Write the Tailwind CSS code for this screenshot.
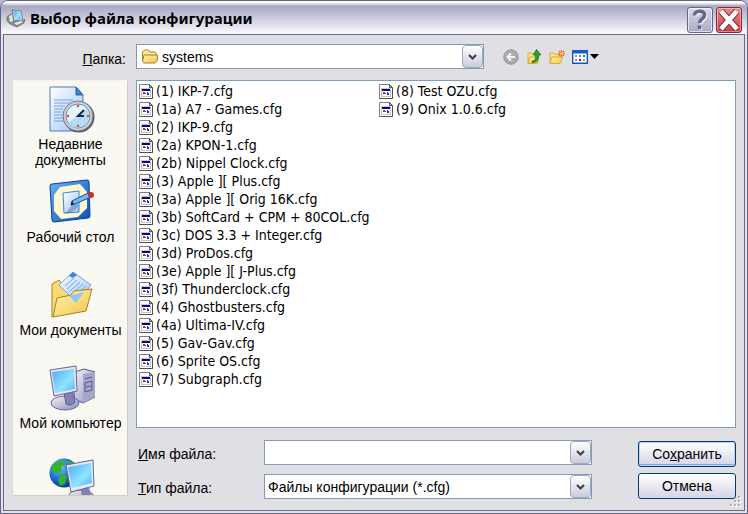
<!DOCTYPE html>
<html lang="ru">
<head>
<meta charset="utf-8">
<title>Выбор файла конфигурации</title>
<script src="https://cdn.jsdelivr.net/npm/@tailwindcss/browser@4"></script>
</head>
<body class="bg-[#b9b9cc] font-['Liberation_Sans',Arial,sans-serif] text-sm leading-4 text-black">
<svg class="absolute size-0" aria-hidden="true">
  <defs>
    <linearGradient id="screen" x1="0" y1="0" x2="1" y2="1"><stop offset="0" stop-color="#4fa8fa"/><stop offset=".6" stop-color="#8fe4ff"/><stop offset="1" stop-color="#4fb0f8"/></linearGradient>
    <linearGradient id="folder" x1="0" y1="0" x2="1" y2="1"><stop offset="0" stop-color="#fff6b8"/><stop offset="1" stop-color="#f4c242"/></linearGradient>
    <linearGradient id="paper" x1="0" y1="0" x2="1" y2="1"><stop offset="0" stop-color="#ffffff"/><stop offset="1" stop-color="#9ec4f6"/></linearGradient>
    <linearGradient id="metal" x1="0" y1="0" x2="1" y2="1"><stop offset="0" stop-color="#f4f4fb"/><stop offset="1" stop-color="#8c8cb8"/></linearGradient>
    <linearGradient id="blue" x1="0" y1="0" x2="1" y2="1"><stop offset="0" stop-color="#6ab0f8"/><stop offset="1" stop-color="#0b4fb4"/></linearGradient>
    <radialGradient id="globe" cx=".35" cy=".3" r=".8"><stop offset="0" stop-color="#7cc4ff"/><stop offset=".5" stop-color="#1b6fe0"/><stop offset="1" stop-color="#06287c"/></radialGradient>
    <symbol id="cfg" viewBox="0 0 14 15">
      <path d="M.5.5h10l3 3v11H.5z" fill="#fff" stroke="#808080"/><path d="M13.500 3.500v11H.5" fill="none" stroke="#50504a"/><path d="M10.500.5v3h3z" fill="#c8c8c0" stroke="#50504a"/>
      <path d="M2 4h10v9H2z" fill="#c4c4c4"/><path d="M3 5h8v2H3z" fill="#000090"/><path d="M3 7h8v5H3z" fill="#fff"/>
      <path d="M4 8h2v2H4z" fill="#e02020"/><path d="M6 9h1v1H6z" fill="#208020"/><path d="M8 8h1v1H8zM8 9h2v2H8z" fill="#1830d0"/>
    </symbol>
    <symbol id="chev" viewBox="0 0 9 6"><path d="M1 1l3.500 3.500L8 1" fill="none" stroke="#3c3c48" stroke-width="2"/></symbol>
  </defs>
</svg>

<main class="flex h-screen flex-col overflow-hidden rounded-t-lg border border-[#62627e] bg-[#e2e2ee] px-0.5 pb-0.5">
  <header class="-mx-0.5 flex h-[33px] shrink-0 items-center gap-1 bg-linear-to-b from-white from-5% via-[#a8a8c4] via-15% to-[#fbfbfe] pr-[5px] pl-[5px]">
    <svg class="size-5" viewBox="0 0 20 20" aria-hidden="true">
      <path d="M1 9l4-3 2 7 9 1 3-3-1 4-7 4-7-3-3-3z" fill="#8b8b90" stroke="#66666c" stroke-width=".7"/>
      <path d="M3 8l3-1 1 6-3 1zM8 15l7-2 2 1-6 3z" fill="#e7e7ea"/>
      <path d="M6 2l9 1 2 9-9 1z" fill="#ddd" stroke="#666" stroke-width=".8"/><path d="M7 3l7 1 1 7-6 1z" fill="url(#screen)"/>
    </svg>
    <h1 class="flex-1 font-['Noto_Sans','Open_Sans',sans-serif] text-[15px] leading-5 font-bold">Выбор файла конфигурации</h1>
    <div class="flex gap-[3px] pt-1">
      <button type="button" aria-label="Справка" class="flex size-[26px] items-center justify-center rounded-[3px] border border-[#66668c] bg-linear-to-b from-[#dadae8] to-[#a9a9c4] ring-1 ring-white/60 ring-inset">
        <svg class="h-[22px] w-5" viewBox="0 0 20 24" fill="none" stroke-width="4" aria-hidden="true"><path d="M5 8c0-6 11-6 11-.5 0 4-5.500 4-5.500 9M10.500 19v4" stroke="#fff"/><path d="M4 7c0-6 11-6 11-.5 0 4-5.500 4-5.500 9M9.500 18v4" stroke="#66668e"/></svg>
      </button>
      <button type="button" aria-label="Закрыть" class="flex size-[26px] items-center justify-center rounded-[3px] border border-[#8c2433] bg-linear-to-b from-[#e98a8a] to-[#c33c44] ring-1 ring-white/40 ring-inset">
        <svg class="size-[22px]" viewBox="0 0 22 22" fill="none" aria-hidden="true"><path d="M3 2l16 18M19 2L3 20" stroke="#7c2530" stroke-width="6.400"/><path d="M3 2l16 18M19 2L3 20" stroke="#fff" stroke-width="4.800"/></svg>
      </button>
    </div>
  </header>

  <form class="relative grid min-h-0 flex-1 grid-cols-[115px_minmax(0,1fr)] grid-rows-[auto_minmax(0,1fr)] gap-x-2 gap-y-[11px] border border-[#6a6a86] bg-[#e0dfe3] pt-[9px] pr-2 pb-[11px] pl-[9px]">
    <label for="folder-name" class="self-center pt-1 pr-0.5 text-right"><u>П</u>апка:</label>
    <div class="flex h-[25px] items-center">
      <div class="flex h-full w-[348px] items-center border border-[#7f9db9] bg-white pl-1">
        <svg class="h-4 w-[18px] shrink-0" viewBox="0 0 18 16" aria-hidden="true"><path d="M1.500 12V3l2-2h4l1.500 2h5l1 1.500V6" fill="#fbe795" stroke="#a8841c"/><path d="M1.500 12.500L3 6h13.500v5L14 14H3z" fill="url(#folder)" stroke="#a8841c"/></svg>
        <input id="folder-name" value="systems" class="min-w-0 flex-1 pl-[3px] outline-none">
        <button type="button" aria-label="Список папок" class="flex h-full w-[21px] items-center justify-center rounded-sm border border-[#a4a4ba] bg-linear-to-b from-white to-[#cccbdc]"><svg class="h-1.5 w-[9px]"><use href="#chev"/></svg></button>
      </div>
      <div class="flex items-center gap-[7px] pl-[19px]">
        <button type="button" aria-label="Назад"><svg class="size-4" viewBox="0 0 16 16"><circle cx="8" cy="8" r="7.200" fill="#adadad" stroke="#8e8e8e"/><path d="M12 8H5M8 4.500L4.500 8 8 11.500" fill="none" stroke="#f4f4f4" stroke-width="2"/></svg></button>
        <button type="button" aria-label="На один уровень вверх"><svg class="size-4" viewBox="0 0 16 16"><path d="M2 14V4h4l1 1.500h5V14z" fill="#fbe48e" stroke="#dcae38"/><path d="M2 14.500L4 8h9l-2 6.500z" fill="url(#folder)" stroke="#d8a830"/><path d="M6 12c3 0 4-2 3.500-6H7l3.500-5.500L15 6h-2.500c.5 5-2 7.500-6.500 7.500z" fill="#28a428" stroke="#107010" stroke-width=".7"/></svg></button>
        <button type="button" aria-label="Создание новой папки"><svg class="size-4" viewBox="0 0 16 16"><path d="M1 14V4h4l1 1.500h5V14z" fill="#fbe48e" stroke="#dcae38"/><path d="M1 14.500L3 8h10.500l-2.500 6.500z" fill="url(#folder)" stroke="#d8a830"/><path d="M12.500 1v7M9 4.500h7M10 2l5 5M15 2l-5 5" stroke="#f06428" stroke-width="1.100"/><circle cx="12.500" cy="4.500" r="1.300" fill="#ffe8a0"/></svg></button>
        <button type="button" aria-label="Меню «Вид»" class="flex items-center gap-0.5">
          <svg class="size-4" viewBox="0 0 16 16"><path d="M.7 1.700h14.600v12.600H.7z" fill="#fff" stroke="#0c5cc8" stroke-width="1.400"/><path d="M0 1h16v3.500H0z" fill="#0c60d0"/><path d="M3 6h2v2H3z" fill="#9898c0"/><path d="M7 6h2v2H7z" fill="#6c80d0"/><path d="M11 6h2v2h-2z" fill="#189018"/><path d="M3 10h2v2H3z" fill="#f07040"/><path d="M7 10h2v2H7z" fill="#2038b0"/><path d="M11 10h2v2h-2z" fill="#d0a000"/></svg>
          <svg class="h-[5px] w-[9px]" viewBox="0 0 9 5"><path d="M0 0h9L4.500 5z"/></svg>
        </button>
      </div>
    </div>

    <nav aria-label="Папки" class="mb-[3px] overflow-hidden border border-t-[#f4f3ea] border-r-[#cfcdbb] border-b-[#cfcdbb] border-l-[#f4f3ea] bg-[#f9f8f3] pt-1">
      <a href="#recent" class="flex h-[93px] flex-col items-center gap-[3px] text-center">
        <svg class="size-12 shrink-0" viewBox="0 0 48 48" aria-hidden="true">
          <path d="M3 2h26l7 8v36H3z" fill="url(#paper)" stroke="#5578b8"/><path d="M29 2v8h7z" fill="#3f84dc" stroke="#3060a8"/>
          <path d="M7 15h19M7 18h16M7 21h11M7 24h9M7 27h8M7 30h8M7 33h9M7 36h10" stroke="#6aa4ee"/>
          <circle cx="32" cy="32" r="15.500" fill="#5a5a68"/><circle cx="31" cy="31" r="15" fill="#cdd0da" stroke="#74747e"/><circle cx="31" cy="31" r="12" fill="#e2f5ff" stroke="#6d8ca8"/><path d="M21 38l19-14a12 12 0 0 1-14 18z" fill="#b0dcfa"/>
          <path d="M37 25l-6 6h6" fill="none" stroke="#202830" stroke-width="2"/><g fill="#f04c18"><circle cx="31" cy="21" r="1.300"/><circle cx="41" cy="31" r="1.300"/><circle cx="31" cy="41" r="1.300"/><circle cx="21" cy="31" r="1.300"/></g>
        </svg>
        <span>Недавние<br>документы</span>
      </a>
      <a href="#desktop" class="flex h-[93px] flex-col items-center gap-[3px] text-center">
        <svg class="size-12 shrink-0" viewBox="0 0 48 48" aria-hidden="true">
          <path d="M3 8q0-2 2-2l35-4q2 0 2 2l1 34q0 2-2 2L7 44q-2 0-2-2z" fill="url(#blue)" stroke="#073f96"/><path d="M13 9l20-3 7 8v16l-9 9-17 2-7-8V17z" fill="#fff6d2"/>
          <path d="M16 15l16-2v21l-15 1z" fill="url(#paper)" stroke="#2f86e0"/><path d="M27 24l5 4-8 7-6 1z" fill="#5878a0" opacity=".5"/>
          <path d="M25 23l16-8 3 4-16 7-4 1z" fill="#73b8fa" stroke="#174c94"/><path d="M24 27l3-1-2-3z" fill="#101820"/><circle cx="44" cy="17" r="3" fill="#c93423"/>
        </svg>
        <span>Рабочий стол</span>
      </a>
      <a href="#documents" class="flex h-[93px] flex-col items-center gap-[3px] text-center">
        <svg class="size-12 shrink-0" viewBox="0 0 48 48" aria-hidden="true">
          <path d="M5 46V13l7-4 3 4h9l16 8v8z" fill="#f8da72" stroke="#aa8426"/>
          <path d="M12 14L26 1l18 13-14 18z" fill="url(#paper)" stroke="#77a6de"/><path d="M22 5l4-4 4 3-4 3z" fill="#3a86dc"/><path d="M18 15l9-8M20 18l10-9M22 21l11-10M24 24l12-11M26 26l13-11" stroke="#65a8f2"/>
          <path d="M6 46l4-19 14-3 3-4 18-2-6 22z" fill="url(#folder)" stroke="#a98124"/><path d="M22 25l15-4-8 11z" fill="#8cc8ff"/>
        </svg>
        <span>Мои документы</span>
      </a>
      <a href="#computer" class="flex h-[93px] flex-col items-center gap-[3px] text-center">
        <svg class="size-12 shrink-0" viewBox="0 0 48 48" aria-hidden="true">
          <path d="M28 8l9-3 11 3v25l-12 6-9-4z" fill="url(#metal)" stroke="#56567e"/><path d="M36 10l12-2v25l-12 6z" fill="#a5a5cf"/><path d="M38 15l7-2M38 19l7-2v9l-7 2zM39 23l5-1" fill="none" stroke="#55558c"/><circle cx="44" cy="31" r="1.600" fill="#5df03c"/>
          <ellipse cx="18" cy="39" rx="14" ry="7" fill="url(#metal)" stroke="#68688f"/><path d="M17 28l8-2 3 12q-4 5-9 2z" fill="#8282b2" stroke="#5e5e90"/>
          <path d="M3 6l26-4 1 25-23 5z" fill="#e8e8f6" stroke="#65658f"/><path d="M5 8l22-3 1 20-20 4z" fill="url(#screen)"/>
        </svg>
        <span>Мой компьютер</span>
      </a>
      <a href="#network" aria-label="Сетевое окружение" class="flex h-[93px] flex-col items-center">
        <svg class="size-12 shrink-0" viewBox="0 0 48 48" aria-hidden="true">
          <circle cx="17" cy="16" r="14.500" fill="url(#globe)"/><path d="M6 7l9-4 4 4-5 3 1 4-5 3-6-3zM14 17l6 2-2 8-5 2-2-6zM19 3l8 3-4 3z" fill="#32b528"/>
          <ellipse cx="34" cy="40" rx="13" ry="7" fill="url(#metal)" stroke="#68688f"/><path d="M33 28l8-2 3 12q-4 5-9 2z" fill="#8282b2"/>
          <path d="M19 8l27-5 1 26-23 6z" fill="#e8e8f6" stroke="#65658f"/><path d="M21 10l23-4 1 20-20 5z" fill="url(#screen)"/>
        </svg>
      </a>
    </nav>

    <div class="flex min-h-0 flex-col gap-3">
      <ul id="files" class="flex min-h-0 flex-1 flex-col flex-wrap content-start overflow-hidden border border-[#7f9db9] bg-white px-0.5 pt-px pb-7 font-['DejaVu_Sans_Condensed','DejaVu_Sans',Tahoma,sans-serif] text-sm leading-4"></ul>
      <div class="flex items-end justify-between gap-4">
        <div class="flex max-w-[456px] flex-1 flex-col gap-[9px]">
          <div class="flex items-center">
            <label for="file-name" class="w-32 pt-0.5 pl-0.5"><u>И</u>мя файла:</label>
            <div class="flex h-[25px] flex-1 border border-[#7f9db9] bg-white">
              <input id="file-name" class="min-w-0 flex-1 px-1 outline-none">
              <button type="button" aria-label="Список имён" class="flex h-full w-[21px] items-center justify-center rounded-sm border border-[#a4a4ba] bg-linear-to-b from-white to-[#cccbdc]"><svg class="h-1.5 w-[9px]"><use href="#chev"/></svg></button>
            </div>
          </div>
          <div class="flex items-center">
            <label for="file-type" class="w-32 pt-0.5 pl-0.5"><u>Т</u>ип файла:</label>
            <div class="flex h-[25px] flex-1 border border-[#7f9db9] bg-white">
              <select id="file-type" class="min-w-0 flex-1 appearance-none pl-[3px] outline-none"><option>Файлы конфигурации (*.cfg)</option></select>
              <span class="pointer-events-none flex h-full w-[21px] items-center justify-center rounded-sm border border-[#a4a4ba] bg-linear-to-b from-white to-[#cccbdc]"><svg class="h-1.5 w-[9px]"><use href="#chev"/></svg></span>
            </div>
          </div>
        </div>
        <div class="flex w-[98px] flex-col gap-1.5">
          <button type="submit" class="h-[26px] rounded-[3px] border border-[#003c74] bg-linear-to-b from-white to-[#d5d4e6] shadow-[inset_0_0_0_1px_#bcd0f5,inset_0_-2px_0_#8aa5e0]">Со<u>х</u>ранить</button>
          <button type="button" class="h-[26px] rounded-[3px] border border-[#003c74] bg-linear-to-b from-white to-[#d5d4e6]">Отмена</button>
        </div>
      </div>
    </div>
    <svg class="absolute right-0.5 bottom-0.5 size-3" viewBox="0 0 12 12" aria-hidden="true"><path d="M9 1h2v2H9zM9 5h2v2H9zM5 5h2v2H5zM9 9h2v2H9zM5 9h2v2H5zM1 9h2v2H1z" fill="#fff"/><path d="M8 0h2v2H8zM8 4h2v2H8zM4 4h2v2H4zM8 8h2v2H8zM4 8h2v2H4zM0 8h2v2H0z" fill="#b3b1a6"/></svg>
  </form>
</main>
<script>
const files = ["(1) IKP-7", "(1a) A7 - Games", "(2) IKP-9", "(2a) KPON-1", "(2b) Nippel Clock", "(3) Apple ][ Plus", "(3a) Apple ][ Orig 16K", "(3b) SoftCard + CPM + 80COL", "(3c) DOS 3.3 + Integer", "(3d) ProDos", "(3e) Apple ][ J-Plus", "(3f) Thunderclock", "(4) Ghostbusters", "(4a) Ultima-IV", "(5) Gav-Gav", "(6) Sprite OS", "(7) Subgraph", "(8) Test OZU", "(9) Onix 1.0.6"];
document.getElementById("files").innerHTML = files.map(f => `<li class="flex h-[18px] w-60 items-center gap-[3px] whitespace-nowrap"><svg class="h-[15px] w-3.5 shrink-0" aria-hidden="true"><use href="#cfg"/></svg><span>${f}.cfg</span></li>`).join("");
</script>
</body>
</html>
